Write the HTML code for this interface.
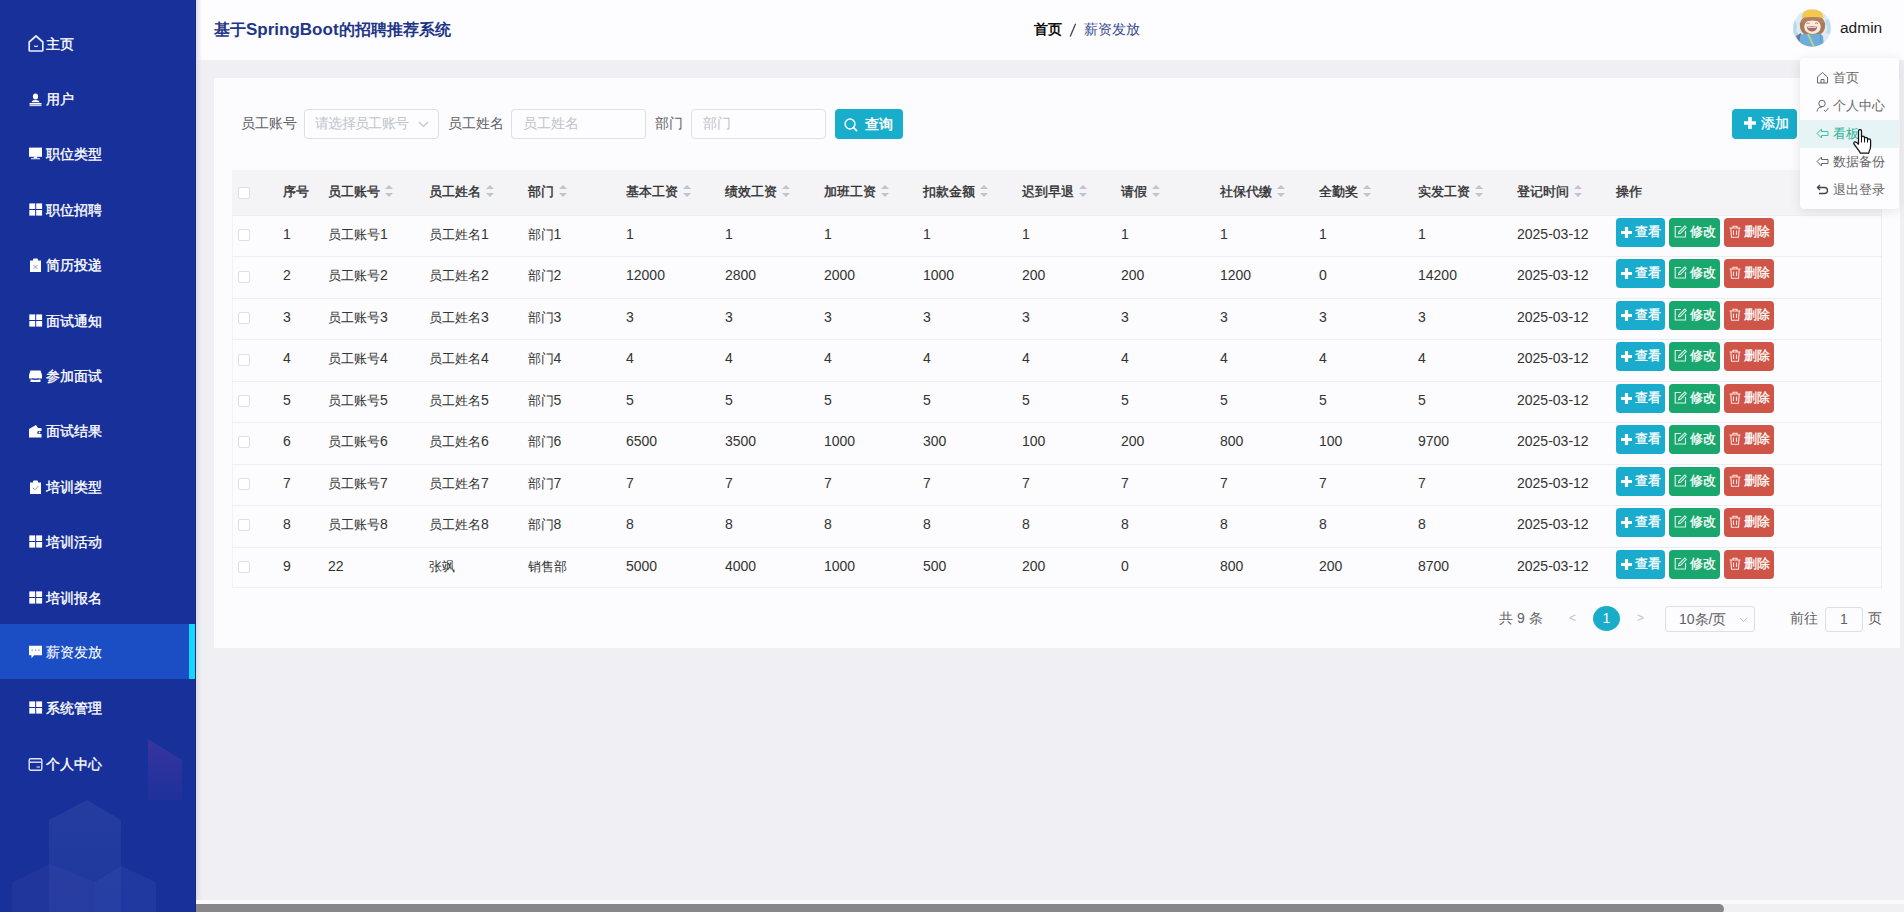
<!DOCTYPE html>
<html><head><meta charset="utf-8">
<style>
*{margin:0;padding:0;box-sizing:border-box}
html,body{width:1904px;height:912px;overflow:hidden;font-family:"Liberation Sans",sans-serif;background:#f0f0f4}
.abs{position:absolute}
#side{position:absolute;left:0;top:0;width:196px;height:912px;background:#17309a;overflow:hidden;border-right:1px solid #142a86}
#side svg.deco{position:absolute;left:0;top:0}
.mi{position:absolute;left:0;width:196px;height:55.4px;color:#fff;font-size:14px;font-weight:normal;-webkit-text-stroke:0.35px #fff}
.mi .ic{position:absolute;left:28px;top:20px;width:15px;height:15px}
.mi .tx{position:absolute;left:46px;top:1.5px;line-height:55.4px;letter-spacing:-0.1px}
.mi.act{background:#1b4ec5;height:55px}
.mi.act .tx{-webkit-text-stroke:0.1px #fff;top:1px}
.mi.act .ic{margin-top:-0.5px}
.mi .ic{margin-top:1.5px}
.mi.act:after{content:"";position:absolute;right:0;top:0;width:7px;height:100%;background:#14d8fa}
#hdr{position:absolute;left:196px;top:0;width:1708px;height:60px;background:#fdfcfe}
#shadowL{position:absolute;left:196px;top:0;width:6px;height:912px;background:linear-gradient(to right,#dcdce6,rgba(240,240,244,0))}
#card{position:absolute;left:214px;top:78px;width:1686px;height:570px;background:#fcfbfd}
.lbl{position:absolute;font-size:14px;color:#606266;line-height:30px;top:108px}
.inp{position:absolute;top:109px;height:30px;border:1px solid #dcdfe6;border-radius:4px;background:#fdfcfe;font-size:14px;color:#c0c4cc;line-height:26px;padding-left:11px}
.sbtn{position:absolute;top:109px;height:30px;border-radius:4px;background:#18aecb;color:#fff;font-size:14px;line-height:30px}
#tbl{position:absolute;background:#fcfbfd;border-bottom:1px solid #ebeef5}
#tbl:after{content:'';position:absolute;right:0;top:0;width:1px;height:100%;background:#ebeef5}
#tbl:before{content:'';position:absolute;left:0;top:0;width:1px;height:100%;background:#f1f1f6}
.th{position:absolute;left:0;top:0;width:1650px;background:#f4f3f6}
.hc{position:absolute;margin-top:0px;font-size:12.7px;font-weight:normal;-webkit-text-stroke:0.4px #303133;color:#303133;white-space:nowrap}
.sort{position:absolute;display:inline-block;width:8px;height:12px;margin-left:5px;top:15px}
.sort b{position:absolute;left:0;width:0;height:0;border-left:4px solid transparent;border-right:4px solid transparent}
.sort .up{top:0;border-bottom:4px solid #c0c4cc}
.sort .dn{top:8px;border-top:4px solid #c0c4cc}
.cb{position:absolute;width:12px;height:12px;border:1px solid #dcdfe6;border-radius:2px;background:#fff}
.tr{position:absolute;left:0;width:1650px;border-top:1px solid #ebeef5}
.tc{position:absolute;top:-2px;font-size:13px;color:#333;white-space:nowrap}
.lt{font-size:14px}
.ops{position:absolute;height:29px;white-space:nowrap}
.btn{position:absolute;top:0;height:29px;border-radius:4px;color:#fff;font-size:13px;line-height:29px}
.b1{left:0;width:49px;background:#1aaccd}
.b2{left:53px;width:51px;background:#1aa76e}
.b3{left:108px;width:50px;background:#cf5549}
.btn .bi{position:absolute}
.btn .bt{position:absolute;top:-1px;-webkit-text-stroke:0.3px #fff}
.ddi{position:absolute;left:0;width:99px;height:28px;font-size:13px;color:#666;line-height:28px}
.ddi span{position:absolute;left:33px;top:0;white-space:nowrap}

</style></head>
<body>
<div id="side">
<svg class="deco" width="196" height="912" viewBox="0 0 196 912">
<defs><linearGradient id="g1" x1="0" y1="0" x2="0" y2="1"><stop offset="0" stop-color="#7a3ca8" stop-opacity="0.35"/><stop offset="1" stop-color="#5a3aa8" stop-opacity="0.12"/></linearGradient>
<linearGradient id="g2" x1="0" y1="0" x2="0" y2="1"><stop offset="0" stop-color="#4a62a8" stop-opacity="0.26"/><stop offset="1" stop-color="#3a56b0" stop-opacity="0.2"/></linearGradient></defs>
<path d="M148 739 L182 760 L182 800 L148 800 Z" fill="url(#g1)"/>
<path d="M49 820 L87 800 L121 820 L121 912 L49 912 Z" fill="url(#g2)"/>
<path d="M12 882 L50 864 L95 882 L95 912 L12 912 Z" fill="#4a4fa8" fill-opacity="0.22"/>
<path d="M95 882 L121 866 L156 882 L156 912 L95 912 Z" fill="#4a66c0" fill-opacity="0.18"/>
</svg>
<div class="mi" style="top:15px"><svg class="ic" viewBox="0 0 16 17" style="left:28px;top:18.5px;width:16px;height:17px"><path d="M1.2 7 L8 1 L14.8 7 V15.2 Q14.8 16 14 16 H2 Q1.2 16 1.2 15.2 Z" fill="none" stroke="#e8ecff" stroke-width="1.7" stroke-linejoin="round"/><path d="M6.2 10.8 Q8 12.2 9.8 10.8" fill="none" stroke="#e8ecff" stroke-width="1.2"/></svg><span class="tx">主页</span></div>
<div class="mi" style="top:70.4px"><svg class="ic" viewBox="0 0 15 15" style="left:28px;top:20px"><ellipse cx="7.5" cy="4.5" rx="2.6" ry="3" fill="#fff"/><path d="M3.5 10.2 Q4 8 7.5 8 Q11 8 11.5 10.2 Z" fill="#fff"/><rect x="1.5" y="11" width="12" height="1.6" fill="#fff"/><rect x="1.5" y="13.2" width="12" height="0.9" fill="#fff"/></svg><span class="tx">用户</span></div>
<div class="mi" style="top:125.8px"><svg class="ic" viewBox="0 0 15 15" style="left:28px;top:20px"><rect x="1" y="0.6" width="13" height="9.2" fill="#fff"/><path d="M5.5 11 H9.5 L9 9.8 H6 Z M3 11.2 H12 V12.3 H3Z" fill="#fff"/></svg><span class="tx">职位类型</span></div>
<div class="mi" style="top:181.2px"><svg class="ic" viewBox="0 0 15 15" style="left:28px;top:20px"><rect x="1.3" y="0.4" width="5.9" height="5.6" fill="#fff"/><rect x="8.2" y="0.4" width="5.9" height="5.6" fill="#fff"/><rect x="1.3" y="7" width="5.9" height="5.6" fill="#fff"/><rect x="8.2" y="7" width="5.9" height="5.6" fill="#fff"/></svg><span class="tx">职位招聘</span></div>
<div class="mi" style="top:236.6px"><svg class="ic" viewBox="0 0 15 15" style="left:28px;top:20px"><path d="M2 2.5 H5 V1.5 Q5 0.5 6 0.5 H9 Q10 0.5 10 1.5 V2.5 H13 V14 H2 Z" fill="#fff"/><path d="M5.5 7 L9.5 11 M9.5 7 L5.5 11" stroke="#8a8fb0" stroke-width="0.9"/></svg><span class="tx">简历投递</span></div>
<div class="mi" style="top:292px"><svg class="ic" viewBox="0 0 15 15" style="left:28px;top:20px"><rect x="1.3" y="0.4" width="5.9" height="5.6" fill="#fff"/><rect x="8.2" y="0.4" width="5.9" height="5.6" fill="#fff"/><rect x="1.3" y="7" width="5.9" height="5.6" fill="#fff"/><rect x="8.2" y="7" width="5.9" height="5.6" fill="#fff"/></svg><span class="tx">面试通知</span></div>
<div class="mi" style="top:347.4px"><svg class="ic" viewBox="0 0 15 15" style="left:28px;top:20px"><path d="M2.5 1.5 H12.5 L14 6 V9.5 H1 V6 Z" fill="#fff"/><path d="M2.5 10.5 H12.5 V13 H2.5Z" fill="#fff"/><path d="M4 9.8 Q7.5 11.5 11 9.8" fill="none" stroke="#17309a" stroke-width="0.8"/></svg><span class="tx">参加面试</span></div>
<div class="mi" style="top:402.8px"><svg class="ic" viewBox="0 0 15 15" style="left:28px;top:20px"><path d="M1 5 L8 1 L10 4 H13.5 V7 H10.5 Q9 7.5 9.2 8.8 Q9.5 10 10.5 10 H13.5 V13.5 H1 Z" fill="#fff"/><circle cx="11.5" cy="8.5" r="0.9" fill="#fff"/></svg><span class="tx">面试结果</span></div>
<div class="mi" style="top:458.2px"><svg class="ic" viewBox="0 0 15 15" style="left:28px;top:20px"><path d="M2 2.5 H5 V1.5 Q5 0.5 6 0.5 H9 Q10 0.5 10 1.5 V2.5 H13 V14 H2 Z" fill="#fff"/><path d="M4.8 7.8 L6.8 9.8 L10.5 6" fill="none" stroke="#8a8fb0" stroke-width="0.9"/></svg><span class="tx">培训类型</span></div>
<div class="mi" style="top:513.6px"><svg class="ic" viewBox="0 0 15 15" style="left:28px;top:20px"><rect x="1.3" y="0.4" width="5.9" height="5.6" fill="#fff"/><rect x="8.2" y="0.4" width="5.9" height="5.6" fill="#fff"/><rect x="1.3" y="7" width="5.9" height="5.6" fill="#fff"/><rect x="8.2" y="7" width="5.9" height="5.6" fill="#fff"/></svg><span class="tx">培训活动</span></div>
<div class="mi" style="top:569px"><svg class="ic" viewBox="0 0 15 15" style="left:28px;top:20px"><rect x="1.3" y="0.4" width="5.9" height="5.6" fill="#fff"/><rect x="8.2" y="0.4" width="5.9" height="5.6" fill="#fff"/><rect x="1.3" y="7" width="5.9" height="5.6" fill="#fff"/><rect x="8.2" y="7" width="5.9" height="5.6" fill="#fff"/></svg><span class="tx">培训报名</span></div>
<div class="mi act" style="top:624.4px"><svg class="ic" viewBox="0 0 15 15" style="left:28px;top:20px"><path d="M1 1.8 H14 V11.2 H6.2 L3.5 14.2 V11.2 H1 Z" fill="#fff"/><rect x="3.5" y="5.5" width="1.3" height="1.3" fill="#8a95c8"/><rect x="6.9" y="5.5" width="1.3" height="1.3" fill="#8a95c8"/><rect x="10.3" y="5.5" width="1.3" height="1.3" fill="#8a95c8"/></svg><span class="tx">薪资发放</span></div>
<div class="mi" style="top:679.8px"><svg class="ic" viewBox="0 0 15 15" style="left:28px;top:20px"><rect x="1.3" y="0.4" width="5.9" height="5.6" fill="#fff"/><rect x="8.2" y="0.4" width="5.9" height="5.6" fill="#fff"/><rect x="1.3" y="7" width="5.9" height="5.6" fill="#fff"/><rect x="8.2" y="7" width="5.9" height="5.6" fill="#fff"/></svg><span class="tx">系统管理</span></div>
<div class="mi" style="top:735.2px"><svg class="ic" viewBox="0 0 15 15" style="left:28px;top:20px"><rect x="1.2" y="1.8" width="12.6" height="11.4" rx="1.5" fill="none" stroke="#dfe4ff" stroke-width="1.4"/><path d="M1.2 5.2 H13.8" stroke="#dfe4ff" stroke-width="1.4"/><path d="M8.5 10 H12" stroke="#dfe4ff" stroke-width="1.1"/></svg><span class="tx" style="font-weight:normal">个人中心</span></div>
</div>
<div id="hdr">
  <div class="abs" style="left:18px;top:19px;font-size:16px;line-height:22px;font-weight:bold;color:#1d3788;white-space:nowrap">基于<span style="font-size:17px">SpringBoot</span>的招聘推荐系统</div>
  <div class="abs" style="left:838px;top:19px;font-size:14px;white-space:nowrap;line-height:20px"><b style="color:#111">首页</b><span style="display:inline-block;width:22px;height:14px;position:relative;vertical-align:-1px"><svg class="abs" style="left:7px;top:2px" width="8" height="15" viewBox="0 0 8 15"><path d="M6.6 0.8 L1.2 13.6" stroke="#444" stroke-width="1.3"/></svg></span><span style="color:#34488f">薪资发放</span></div>
  <svg class="abs" style="left:1597px;top:9px" width="38" height="38" viewBox="0 0 38 38">
    <defs><clipPath id="cc"><circle cx="19" cy="19" r="18.8"/></clipPath></defs>
    <g clip-path="url(#cc)">
      <rect width="38" height="38" fill="#dcebf6"/>
      <path d="M0 10 Q6 14 3 22 Q8 26 4 32 L0 32Z" fill="#b9d8f0"/>
      <path d="M32 12 Q36 18 33 24 L38 26 V8Z" fill="#bcdcf2"/>
      <path d="M3 27 L8 24 L10 30 L6 33Z" fill="#6d7690"/>
      <path d="M6 38 L7 27 Q12 23 19 23.5 Q26 23 30 27 L31 38Z" fill="#6eaddb"/>
      <path d="M14 25 L20 38 L22 38 L16 25Z" fill="#b6d68a"/>
      <path d="M27 20 L28 34" stroke="#6a8aa0" stroke-width="0.6"/>
      <ellipse cx="19.5" cy="15.5" rx="12.5" ry="10" fill="#b08060"/>
      <path d="M6.8 14 Q6.5 22 11 25 L28 25 Q32.5 22 32.2 14Z" fill="#a97a5a"/>
      <ellipse cx="19.5" cy="17.8" rx="8.3" ry="7.2" fill="#fbe9de"/>
      <path d="M11 10.5 Q19.5 7.5 28 10.5 L28 13 Q19.5 10 11 13Z" fill="#b08060"/>
      <path d="M13.8 17.8 Q19 16.8 24.2 17.8 Q23.5 22.5 19 22.5 Q14.5 22.5 13.8 17.8Z" fill="#a86a62"/>
      <path d="M14.8 18.3 Q19 17.6 23.2 18.3 L23 19 Q19 18.4 15 19Z" fill="#f5f0f0"/>
      <path d="M13.5 14.5 Q15 13.5 16.5 14.5 M22 14.5 Q23.5 13.5 25 14.5" stroke="#8a5a48" stroke-width="0.7" fill="none"/>
      <path d="M8.5 9 Q9 0.5 19.5 0.3 Q30 0.5 30.8 9 Q19.5 6.8 8.5 9Z" fill="#f2c94e"/>
    </g>
  </svg>
  <div class="abs" style="left:1644px;top:18px;font-size:15.5px;color:#1a1a1a;line-height:20px">admin</div>
</div>
<div id="shadowL"></div>
<div id="card"></div>
<div class="lbl" style="left:241px">员工账号</div>
<div class="inp" style="left:304px;width:135px;font-size:14px;letter-spacing:-0.7px;padding-left:10px">请选择员工账号<svg class="abs" style="left:113px;top:11px" width="11" height="7" viewBox="0 0 11 7"><path d="M1 1 L5.5 5.5 L10 1" fill="none" stroke="#c0c4cc" stroke-width="1.1"/></svg></div>
<div class="lbl" style="left:448px">员工姓名</div>
<div class="inp" style="left:511px;width:135px">员工姓名</div>
<div class="lbl" style="left:655px">部门</div>
<div class="inp" style="left:691px;width:135px">部门</div>
<div class="sbtn" style="left:835px;width:68px"><svg class="abs" style="left:8.5px;top:8.5px" width="14" height="14" viewBox="0 0 14 14"><circle cx="6" cy="6" r="4.9" fill="none" stroke="#fff" stroke-width="1.5"/><path d="M9.6 9.6 L12.6 12.6" stroke="#fff" stroke-width="1.8" stroke-linecap="round"/></svg><span class="abs" style="left:30px;top:0;font-weight:bold">查询</span></div>
<div class="sbtn" style="left:1732px;width:65px"><svg class="abs" style="left:12px;top:8px" width="12" height="12" viewBox="0 0 12 12"><path d="M4.2 0 H7.8 V4.2 H12 V7.8 H7.8 V12 H4.2 V7.8 H0 V4.2 H4.2Z" fill="#fff"/></svg><span class="abs" style="left:29px;top:-1px;-webkit-text-stroke:0.3px #fff">添加</span></div>
<div id="tbl" style="left:232px;top:170px;width:1650px;height:418.00px">
<div class="th" style="height:45px"></div>
<div class="cb" style="left:6px;top:17px"></div>
<div class="hc" style="left:51px;top:0;height:45px;line-height:45px">序号</div>
<div class="hc" style="left:96px;top:0;height:45px;line-height:45px">员工账号<i class="sort"><b class="up"></b><b class="dn"></b></i></div>
<div class="hc" style="left:197px;top:0;height:45px;line-height:45px">员工姓名<i class="sort"><b class="up"></b><b class="dn"></b></i></div>
<div class="hc" style="left:295.5px;top:0;height:45px;line-height:45px">部门<i class="sort"><b class="up"></b><b class="dn"></b></i></div>
<div class="hc" style="left:394px;top:0;height:45px;line-height:45px">基本工资<i class="sort"><b class="up"></b><b class="dn"></b></i></div>
<div class="hc" style="left:493px;top:0;height:45px;line-height:45px">绩效工资<i class="sort"><b class="up"></b><b class="dn"></b></i></div>
<div class="hc" style="left:592px;top:0;height:45px;line-height:45px">加班工资<i class="sort"><b class="up"></b><b class="dn"></b></i></div>
<div class="hc" style="left:691px;top:0;height:45px;line-height:45px">扣款金额<i class="sort"><b class="up"></b><b class="dn"></b></i></div>
<div class="hc" style="left:790px;top:0;height:45px;line-height:45px">迟到早退<i class="sort"><b class="up"></b><b class="dn"></b></i></div>
<div class="hc" style="left:889px;top:0;height:45px;line-height:45px">请假<i class="sort"><b class="up"></b><b class="dn"></b></i></div>
<div class="hc" style="left:988px;top:0;height:45px;line-height:45px">社保代缴<i class="sort"><b class="up"></b><b class="dn"></b></i></div>
<div class="hc" style="left:1087px;top:0;height:45px;line-height:45px">全勤奖<i class="sort"><b class="up"></b><b class="dn"></b></i></div>
<div class="hc" style="left:1186px;top:0;height:45px;line-height:45px">实发工资<i class="sort"><b class="up"></b><b class="dn"></b></i></div>
<div class="hc" style="left:1285px;top:0;height:45px;line-height:45px">登记时间<i class="sort"><b class="up"></b><b class="dn"></b></i></div>
<div class="hc" style="left:1384px;top:0;height:45px;line-height:45px">操作</div>
<div class="tr" style="top:45.00px;height:41.44px">
<div class="cb" style="left:6px;top:13.22px"></div>
<div class="tc" style="left:51px;line-height:41.44px"><span class="lt">1</span></div>
<div class="tc" style="left:96px;line-height:41.44px">员工账号<span class="lt">1</span></div>
<div class="tc" style="left:197px;line-height:41.44px">员工姓名<span class="lt">1</span></div>
<div class="tc" style="left:295.5px;line-height:41.44px">部门<span class="lt">1</span></div>
<div class="tc" style="left:394px;line-height:41.44px"><span class="lt">1</span></div>
<div class="tc" style="left:493px;line-height:41.44px"><span class="lt">1</span></div>
<div class="tc" style="left:592px;line-height:41.44px"><span class="lt">1</span></div>
<div class="tc" style="left:691px;line-height:41.44px"><span class="lt">1</span></div>
<div class="tc" style="left:790px;line-height:41.44px"><span class="lt">1</span></div>
<div class="tc" style="left:889px;line-height:41.44px"><span class="lt">1</span></div>
<div class="tc" style="left:988px;line-height:41.44px"><span class="lt">1</span></div>
<div class="tc" style="left:1087px;line-height:41.44px"><span class="lt">1</span></div>
<div class="tc" style="left:1186px;line-height:41.44px"><span class="lt">1</span></div>
<div class="tc" style="left:1285px;line-height:41.44px"><span class="lt">2025-03-12</span></div>
<div class="ops" style="left:1384px;top:2px"><span class="btn b1"><svg class="bi" style="left:5px;top:9px" width="11" height="11" viewBox="0 0 11 11"><path d="M3.9 0 H7.1 V3.9 H11 V7.1 H7.1 V11 H3.9 V7.1 H0 V3.9 H3.9Z" fill="#fff"/></svg><span class="bt" style="left:19px">查看</span></span><span class="btn b2"><svg class="bi" style="left:5px;top:7px" width="13" height="13" viewBox="0 0 13 13"><path d="M7 1.5 H1.2 V12 H11.5 V6" fill="none" stroke="#dff5ea" stroke-width="1.1"/><path d="M4.5 8.8 L5 6.8 L10.8 1 L12.3 2.5 L6.5 8.3 Z" fill="none" stroke="#dff5ea" stroke-width="1.1"/></svg><span class="bt" style="left:21px">修改</span></span><span class="btn b3"><svg class="bi" style="left:5px;top:7px" width="12" height="13" viewBox="0 0 12 13"><path d="M0.5 3 H11.5 M4 3 V1.2 H8 V3 M1.8 3 L2.5 12.2 H9.5 L10.2 3 M4.5 5.5 V10 M7.5 5.5 V10" fill="none" stroke="#fde4e0" stroke-width="1.1"/></svg><span class="bt" style="left:20px">删除</span></span></div>
</div>
<div class="tr" style="top:86.44px;height:41.44px">
<div class="cb" style="left:6px;top:13.22px"></div>
<div class="tc" style="left:51px;line-height:41.44px"><span class="lt">2</span></div>
<div class="tc" style="left:96px;line-height:41.44px">员工账号<span class="lt">2</span></div>
<div class="tc" style="left:197px;line-height:41.44px">员工姓名<span class="lt">2</span></div>
<div class="tc" style="left:295.5px;line-height:41.44px">部门<span class="lt">2</span></div>
<div class="tc" style="left:394px;line-height:41.44px"><span class="lt">12000</span></div>
<div class="tc" style="left:493px;line-height:41.44px"><span class="lt">2800</span></div>
<div class="tc" style="left:592px;line-height:41.44px"><span class="lt">2000</span></div>
<div class="tc" style="left:691px;line-height:41.44px"><span class="lt">1000</span></div>
<div class="tc" style="left:790px;line-height:41.44px"><span class="lt">200</span></div>
<div class="tc" style="left:889px;line-height:41.44px"><span class="lt">200</span></div>
<div class="tc" style="left:988px;line-height:41.44px"><span class="lt">1200</span></div>
<div class="tc" style="left:1087px;line-height:41.44px"><span class="lt">0</span></div>
<div class="tc" style="left:1186px;line-height:41.44px"><span class="lt">14200</span></div>
<div class="tc" style="left:1285px;line-height:41.44px"><span class="lt">2025-03-12</span></div>
<div class="ops" style="left:1384px;top:2px"><span class="btn b1"><svg class="bi" style="left:5px;top:9px" width="11" height="11" viewBox="0 0 11 11"><path d="M3.9 0 H7.1 V3.9 H11 V7.1 H7.1 V11 H3.9 V7.1 H0 V3.9 H3.9Z" fill="#fff"/></svg><span class="bt" style="left:19px">查看</span></span><span class="btn b2"><svg class="bi" style="left:5px;top:7px" width="13" height="13" viewBox="0 0 13 13"><path d="M7 1.5 H1.2 V12 H11.5 V6" fill="none" stroke="#dff5ea" stroke-width="1.1"/><path d="M4.5 8.8 L5 6.8 L10.8 1 L12.3 2.5 L6.5 8.3 Z" fill="none" stroke="#dff5ea" stroke-width="1.1"/></svg><span class="bt" style="left:21px">修改</span></span><span class="btn b3"><svg class="bi" style="left:5px;top:7px" width="12" height="13" viewBox="0 0 12 13"><path d="M0.5 3 H11.5 M4 3 V1.2 H8 V3 M1.8 3 L2.5 12.2 H9.5 L10.2 3 M4.5 5.5 V10 M7.5 5.5 V10" fill="none" stroke="#fde4e0" stroke-width="1.1"/></svg><span class="bt" style="left:20px">删除</span></span></div>
</div>
<div class="tr" style="top:127.89px;height:41.44px">
<div class="cb" style="left:6px;top:13.22px"></div>
<div class="tc" style="left:51px;line-height:41.44px"><span class="lt">3</span></div>
<div class="tc" style="left:96px;line-height:41.44px">员工账号<span class="lt">3</span></div>
<div class="tc" style="left:197px;line-height:41.44px">员工姓名<span class="lt">3</span></div>
<div class="tc" style="left:295.5px;line-height:41.44px">部门<span class="lt">3</span></div>
<div class="tc" style="left:394px;line-height:41.44px"><span class="lt">3</span></div>
<div class="tc" style="left:493px;line-height:41.44px"><span class="lt">3</span></div>
<div class="tc" style="left:592px;line-height:41.44px"><span class="lt">3</span></div>
<div class="tc" style="left:691px;line-height:41.44px"><span class="lt">3</span></div>
<div class="tc" style="left:790px;line-height:41.44px"><span class="lt">3</span></div>
<div class="tc" style="left:889px;line-height:41.44px"><span class="lt">3</span></div>
<div class="tc" style="left:988px;line-height:41.44px"><span class="lt">3</span></div>
<div class="tc" style="left:1087px;line-height:41.44px"><span class="lt">3</span></div>
<div class="tc" style="left:1186px;line-height:41.44px"><span class="lt">3</span></div>
<div class="tc" style="left:1285px;line-height:41.44px"><span class="lt">2025-03-12</span></div>
<div class="ops" style="left:1384px;top:2px"><span class="btn b1"><svg class="bi" style="left:5px;top:9px" width="11" height="11" viewBox="0 0 11 11"><path d="M3.9 0 H7.1 V3.9 H11 V7.1 H7.1 V11 H3.9 V7.1 H0 V3.9 H3.9Z" fill="#fff"/></svg><span class="bt" style="left:19px">查看</span></span><span class="btn b2"><svg class="bi" style="left:5px;top:7px" width="13" height="13" viewBox="0 0 13 13"><path d="M7 1.5 H1.2 V12 H11.5 V6" fill="none" stroke="#dff5ea" stroke-width="1.1"/><path d="M4.5 8.8 L5 6.8 L10.8 1 L12.3 2.5 L6.5 8.3 Z" fill="none" stroke="#dff5ea" stroke-width="1.1"/></svg><span class="bt" style="left:21px">修改</span></span><span class="btn b3"><svg class="bi" style="left:5px;top:7px" width="12" height="13" viewBox="0 0 12 13"><path d="M0.5 3 H11.5 M4 3 V1.2 H8 V3 M1.8 3 L2.5 12.2 H9.5 L10.2 3 M4.5 5.5 V10 M7.5 5.5 V10" fill="none" stroke="#fde4e0" stroke-width="1.1"/></svg><span class="bt" style="left:20px">删除</span></span></div>
</div>
<div class="tr" style="top:169.33px;height:41.44px">
<div class="cb" style="left:6px;top:13.22px"></div>
<div class="tc" style="left:51px;line-height:41.44px"><span class="lt">4</span></div>
<div class="tc" style="left:96px;line-height:41.44px">员工账号<span class="lt">4</span></div>
<div class="tc" style="left:197px;line-height:41.44px">员工姓名<span class="lt">4</span></div>
<div class="tc" style="left:295.5px;line-height:41.44px">部门<span class="lt">4</span></div>
<div class="tc" style="left:394px;line-height:41.44px"><span class="lt">4</span></div>
<div class="tc" style="left:493px;line-height:41.44px"><span class="lt">4</span></div>
<div class="tc" style="left:592px;line-height:41.44px"><span class="lt">4</span></div>
<div class="tc" style="left:691px;line-height:41.44px"><span class="lt">4</span></div>
<div class="tc" style="left:790px;line-height:41.44px"><span class="lt">4</span></div>
<div class="tc" style="left:889px;line-height:41.44px"><span class="lt">4</span></div>
<div class="tc" style="left:988px;line-height:41.44px"><span class="lt">4</span></div>
<div class="tc" style="left:1087px;line-height:41.44px"><span class="lt">4</span></div>
<div class="tc" style="left:1186px;line-height:41.44px"><span class="lt">4</span></div>
<div class="tc" style="left:1285px;line-height:41.44px"><span class="lt">2025-03-12</span></div>
<div class="ops" style="left:1384px;top:2px"><span class="btn b1"><svg class="bi" style="left:5px;top:9px" width="11" height="11" viewBox="0 0 11 11"><path d="M3.9 0 H7.1 V3.9 H11 V7.1 H7.1 V11 H3.9 V7.1 H0 V3.9 H3.9Z" fill="#fff"/></svg><span class="bt" style="left:19px">查看</span></span><span class="btn b2"><svg class="bi" style="left:5px;top:7px" width="13" height="13" viewBox="0 0 13 13"><path d="M7 1.5 H1.2 V12 H11.5 V6" fill="none" stroke="#dff5ea" stroke-width="1.1"/><path d="M4.5 8.8 L5 6.8 L10.8 1 L12.3 2.5 L6.5 8.3 Z" fill="none" stroke="#dff5ea" stroke-width="1.1"/></svg><span class="bt" style="left:21px">修改</span></span><span class="btn b3"><svg class="bi" style="left:5px;top:7px" width="12" height="13" viewBox="0 0 12 13"><path d="M0.5 3 H11.5 M4 3 V1.2 H8 V3 M1.8 3 L2.5 12.2 H9.5 L10.2 3 M4.5 5.5 V10 M7.5 5.5 V10" fill="none" stroke="#fde4e0" stroke-width="1.1"/></svg><span class="bt" style="left:20px">删除</span></span></div>
</div>
<div class="tr" style="top:210.78px;height:41.44px">
<div class="cb" style="left:6px;top:13.22px"></div>
<div class="tc" style="left:51px;line-height:41.44px"><span class="lt">5</span></div>
<div class="tc" style="left:96px;line-height:41.44px">员工账号<span class="lt">5</span></div>
<div class="tc" style="left:197px;line-height:41.44px">员工姓名<span class="lt">5</span></div>
<div class="tc" style="left:295.5px;line-height:41.44px">部门<span class="lt">5</span></div>
<div class="tc" style="left:394px;line-height:41.44px"><span class="lt">5</span></div>
<div class="tc" style="left:493px;line-height:41.44px"><span class="lt">5</span></div>
<div class="tc" style="left:592px;line-height:41.44px"><span class="lt">5</span></div>
<div class="tc" style="left:691px;line-height:41.44px"><span class="lt">5</span></div>
<div class="tc" style="left:790px;line-height:41.44px"><span class="lt">5</span></div>
<div class="tc" style="left:889px;line-height:41.44px"><span class="lt">5</span></div>
<div class="tc" style="left:988px;line-height:41.44px"><span class="lt">5</span></div>
<div class="tc" style="left:1087px;line-height:41.44px"><span class="lt">5</span></div>
<div class="tc" style="left:1186px;line-height:41.44px"><span class="lt">5</span></div>
<div class="tc" style="left:1285px;line-height:41.44px"><span class="lt">2025-03-12</span></div>
<div class="ops" style="left:1384px;top:2px"><span class="btn b1"><svg class="bi" style="left:5px;top:9px" width="11" height="11" viewBox="0 0 11 11"><path d="M3.9 0 H7.1 V3.9 H11 V7.1 H7.1 V11 H3.9 V7.1 H0 V3.9 H3.9Z" fill="#fff"/></svg><span class="bt" style="left:19px">查看</span></span><span class="btn b2"><svg class="bi" style="left:5px;top:7px" width="13" height="13" viewBox="0 0 13 13"><path d="M7 1.5 H1.2 V12 H11.5 V6" fill="none" stroke="#dff5ea" stroke-width="1.1"/><path d="M4.5 8.8 L5 6.8 L10.8 1 L12.3 2.5 L6.5 8.3 Z" fill="none" stroke="#dff5ea" stroke-width="1.1"/></svg><span class="bt" style="left:21px">修改</span></span><span class="btn b3"><svg class="bi" style="left:5px;top:7px" width="12" height="13" viewBox="0 0 12 13"><path d="M0.5 3 H11.5 M4 3 V1.2 H8 V3 M1.8 3 L2.5 12.2 H9.5 L10.2 3 M4.5 5.5 V10 M7.5 5.5 V10" fill="none" stroke="#fde4e0" stroke-width="1.1"/></svg><span class="bt" style="left:20px">删除</span></span></div>
</div>
<div class="tr" style="top:252.22px;height:41.44px">
<div class="cb" style="left:6px;top:13.22px"></div>
<div class="tc" style="left:51px;line-height:41.44px"><span class="lt">6</span></div>
<div class="tc" style="left:96px;line-height:41.44px">员工账号<span class="lt">6</span></div>
<div class="tc" style="left:197px;line-height:41.44px">员工姓名<span class="lt">6</span></div>
<div class="tc" style="left:295.5px;line-height:41.44px">部门<span class="lt">6</span></div>
<div class="tc" style="left:394px;line-height:41.44px"><span class="lt">6500</span></div>
<div class="tc" style="left:493px;line-height:41.44px"><span class="lt">3500</span></div>
<div class="tc" style="left:592px;line-height:41.44px"><span class="lt">1000</span></div>
<div class="tc" style="left:691px;line-height:41.44px"><span class="lt">300</span></div>
<div class="tc" style="left:790px;line-height:41.44px"><span class="lt">100</span></div>
<div class="tc" style="left:889px;line-height:41.44px"><span class="lt">200</span></div>
<div class="tc" style="left:988px;line-height:41.44px"><span class="lt">800</span></div>
<div class="tc" style="left:1087px;line-height:41.44px"><span class="lt">100</span></div>
<div class="tc" style="left:1186px;line-height:41.44px"><span class="lt">9700</span></div>
<div class="tc" style="left:1285px;line-height:41.44px"><span class="lt">2025-03-12</span></div>
<div class="ops" style="left:1384px;top:2px"><span class="btn b1"><svg class="bi" style="left:5px;top:9px" width="11" height="11" viewBox="0 0 11 11"><path d="M3.9 0 H7.1 V3.9 H11 V7.1 H7.1 V11 H3.9 V7.1 H0 V3.9 H3.9Z" fill="#fff"/></svg><span class="bt" style="left:19px">查看</span></span><span class="btn b2"><svg class="bi" style="left:5px;top:7px" width="13" height="13" viewBox="0 0 13 13"><path d="M7 1.5 H1.2 V12 H11.5 V6" fill="none" stroke="#dff5ea" stroke-width="1.1"/><path d="M4.5 8.8 L5 6.8 L10.8 1 L12.3 2.5 L6.5 8.3 Z" fill="none" stroke="#dff5ea" stroke-width="1.1"/></svg><span class="bt" style="left:21px">修改</span></span><span class="btn b3"><svg class="bi" style="left:5px;top:7px" width="12" height="13" viewBox="0 0 12 13"><path d="M0.5 3 H11.5 M4 3 V1.2 H8 V3 M1.8 3 L2.5 12.2 H9.5 L10.2 3 M4.5 5.5 V10 M7.5 5.5 V10" fill="none" stroke="#fde4e0" stroke-width="1.1"/></svg><span class="bt" style="left:20px">删除</span></span></div>
</div>
<div class="tr" style="top:293.67px;height:41.44px">
<div class="cb" style="left:6px;top:13.22px"></div>
<div class="tc" style="left:51px;line-height:41.44px"><span class="lt">7</span></div>
<div class="tc" style="left:96px;line-height:41.44px">员工账号<span class="lt">7</span></div>
<div class="tc" style="left:197px;line-height:41.44px">员工姓名<span class="lt">7</span></div>
<div class="tc" style="left:295.5px;line-height:41.44px">部门<span class="lt">7</span></div>
<div class="tc" style="left:394px;line-height:41.44px"><span class="lt">7</span></div>
<div class="tc" style="left:493px;line-height:41.44px"><span class="lt">7</span></div>
<div class="tc" style="left:592px;line-height:41.44px"><span class="lt">7</span></div>
<div class="tc" style="left:691px;line-height:41.44px"><span class="lt">7</span></div>
<div class="tc" style="left:790px;line-height:41.44px"><span class="lt">7</span></div>
<div class="tc" style="left:889px;line-height:41.44px"><span class="lt">7</span></div>
<div class="tc" style="left:988px;line-height:41.44px"><span class="lt">7</span></div>
<div class="tc" style="left:1087px;line-height:41.44px"><span class="lt">7</span></div>
<div class="tc" style="left:1186px;line-height:41.44px"><span class="lt">7</span></div>
<div class="tc" style="left:1285px;line-height:41.44px"><span class="lt">2025-03-12</span></div>
<div class="ops" style="left:1384px;top:2px"><span class="btn b1"><svg class="bi" style="left:5px;top:9px" width="11" height="11" viewBox="0 0 11 11"><path d="M3.9 0 H7.1 V3.9 H11 V7.1 H7.1 V11 H3.9 V7.1 H0 V3.9 H3.9Z" fill="#fff"/></svg><span class="bt" style="left:19px">查看</span></span><span class="btn b2"><svg class="bi" style="left:5px;top:7px" width="13" height="13" viewBox="0 0 13 13"><path d="M7 1.5 H1.2 V12 H11.5 V6" fill="none" stroke="#dff5ea" stroke-width="1.1"/><path d="M4.5 8.8 L5 6.8 L10.8 1 L12.3 2.5 L6.5 8.3 Z" fill="none" stroke="#dff5ea" stroke-width="1.1"/></svg><span class="bt" style="left:21px">修改</span></span><span class="btn b3"><svg class="bi" style="left:5px;top:7px" width="12" height="13" viewBox="0 0 12 13"><path d="M0.5 3 H11.5 M4 3 V1.2 H8 V3 M1.8 3 L2.5 12.2 H9.5 L10.2 3 M4.5 5.5 V10 M7.5 5.5 V10" fill="none" stroke="#fde4e0" stroke-width="1.1"/></svg><span class="bt" style="left:20px">删除</span></span></div>
</div>
<div class="tr" style="top:335.11px;height:41.44px">
<div class="cb" style="left:6px;top:13.22px"></div>
<div class="tc" style="left:51px;line-height:41.44px"><span class="lt">8</span></div>
<div class="tc" style="left:96px;line-height:41.44px">员工账号<span class="lt">8</span></div>
<div class="tc" style="left:197px;line-height:41.44px">员工姓名<span class="lt">8</span></div>
<div class="tc" style="left:295.5px;line-height:41.44px">部门<span class="lt">8</span></div>
<div class="tc" style="left:394px;line-height:41.44px"><span class="lt">8</span></div>
<div class="tc" style="left:493px;line-height:41.44px"><span class="lt">8</span></div>
<div class="tc" style="left:592px;line-height:41.44px"><span class="lt">8</span></div>
<div class="tc" style="left:691px;line-height:41.44px"><span class="lt">8</span></div>
<div class="tc" style="left:790px;line-height:41.44px"><span class="lt">8</span></div>
<div class="tc" style="left:889px;line-height:41.44px"><span class="lt">8</span></div>
<div class="tc" style="left:988px;line-height:41.44px"><span class="lt">8</span></div>
<div class="tc" style="left:1087px;line-height:41.44px"><span class="lt">8</span></div>
<div class="tc" style="left:1186px;line-height:41.44px"><span class="lt">8</span></div>
<div class="tc" style="left:1285px;line-height:41.44px"><span class="lt">2025-03-12</span></div>
<div class="ops" style="left:1384px;top:2px"><span class="btn b1"><svg class="bi" style="left:5px;top:9px" width="11" height="11" viewBox="0 0 11 11"><path d="M3.9 0 H7.1 V3.9 H11 V7.1 H7.1 V11 H3.9 V7.1 H0 V3.9 H3.9Z" fill="#fff"/></svg><span class="bt" style="left:19px">查看</span></span><span class="btn b2"><svg class="bi" style="left:5px;top:7px" width="13" height="13" viewBox="0 0 13 13"><path d="M7 1.5 H1.2 V12 H11.5 V6" fill="none" stroke="#dff5ea" stroke-width="1.1"/><path d="M4.5 8.8 L5 6.8 L10.8 1 L12.3 2.5 L6.5 8.3 Z" fill="none" stroke="#dff5ea" stroke-width="1.1"/></svg><span class="bt" style="left:21px">修改</span></span><span class="btn b3"><svg class="bi" style="left:5px;top:7px" width="12" height="13" viewBox="0 0 12 13"><path d="M0.5 3 H11.5 M4 3 V1.2 H8 V3 M1.8 3 L2.5 12.2 H9.5 L10.2 3 M4.5 5.5 V10 M7.5 5.5 V10" fill="none" stroke="#fde4e0" stroke-width="1.1"/></svg><span class="bt" style="left:20px">删除</span></span></div>
</div>
<div class="tr" style="top:376.56px;height:41.44px">
<div class="cb" style="left:6px;top:13.22px"></div>
<div class="tc" style="left:51px;line-height:41.44px"><span class="lt">9</span></div>
<div class="tc" style="left:96px;line-height:41.44px"><span class="lt">22</span></div>
<div class="tc" style="left:197px;line-height:41.44px">张飒</div>
<div class="tc" style="left:295.5px;line-height:41.44px">销售部</div>
<div class="tc" style="left:394px;line-height:41.44px"><span class="lt">5000</span></div>
<div class="tc" style="left:493px;line-height:41.44px"><span class="lt">4000</span></div>
<div class="tc" style="left:592px;line-height:41.44px"><span class="lt">1000</span></div>
<div class="tc" style="left:691px;line-height:41.44px"><span class="lt">500</span></div>
<div class="tc" style="left:790px;line-height:41.44px"><span class="lt">200</span></div>
<div class="tc" style="left:889px;line-height:41.44px"><span class="lt">0</span></div>
<div class="tc" style="left:988px;line-height:41.44px"><span class="lt">800</span></div>
<div class="tc" style="left:1087px;line-height:41.44px"><span class="lt">200</span></div>
<div class="tc" style="left:1186px;line-height:41.44px"><span class="lt">8700</span></div>
<div class="tc" style="left:1285px;line-height:41.44px"><span class="lt">2025-03-12</span></div>
<div class="ops" style="left:1384px;top:2px"><span class="btn b1"><svg class="bi" style="left:5px;top:9px" width="11" height="11" viewBox="0 0 11 11"><path d="M3.9 0 H7.1 V3.9 H11 V7.1 H7.1 V11 H3.9 V7.1 H0 V3.9 H3.9Z" fill="#fff"/></svg><span class="bt" style="left:19px">查看</span></span><span class="btn b2"><svg class="bi" style="left:5px;top:7px" width="13" height="13" viewBox="0 0 13 13"><path d="M7 1.5 H1.2 V12 H11.5 V6" fill="none" stroke="#dff5ea" stroke-width="1.1"/><path d="M4.5 8.8 L5 6.8 L10.8 1 L12.3 2.5 L6.5 8.3 Z" fill="none" stroke="#dff5ea" stroke-width="1.1"/></svg><span class="bt" style="left:21px">修改</span></span><span class="btn b3"><svg class="bi" style="left:5px;top:7px" width="12" height="13" viewBox="0 0 12 13"><path d="M0.5 3 H11.5 M4 3 V1.2 H8 V3 M1.8 3 L2.5 12.2 H9.5 L10.2 3 M4.5 5.5 V10 M7.5 5.5 V10" fill="none" stroke="#fde4e0" stroke-width="1.1"/></svg><span class="bt" style="left:20px">删除</span></span></div>
</div>
</div><div class="abs" style="left:1499px;top:608px;font-size:14px;color:#606266;line-height:20px;white-space:nowrap">共 9 条</div>
<div class="abs" style="left:1569px;top:608px;font-size:12px;color:#c0c4cc;line-height:20px">&lt;</div>
<div class="abs" style="left:1593px;top:606px;width:27px;height:25px;border-radius:50%;background:#1aadca;color:#fff;font-size:14px;line-height:25px;text-align:center">1</div>
<div class="abs" style="left:1637px;top:608px;font-size:12px;color:#c0c4cc;line-height:20px">&gt;</div>
<div class="abs" style="left:1665px;top:606px;width:90px;height:26px;border:1px solid #dcdfe6;border-radius:3px;font-size:14px;color:#606266;line-height:24px;padding-left:13px">10条/页<svg class="abs" style="left:73px;top:10px" width="9" height="6" viewBox="0 0 9 6"><path d="M1 1 L4.5 4.5 L8 1" fill="none" stroke="#c0c4cc" stroke-width="1"/></svg></div>
<div class="abs" style="left:1790px;top:608px;font-size:14px;color:#606266;line-height:20px">前往</div>
<div class="abs" style="left:1825px;top:607px;width:38px;height:25px;border:1px solid #dcdfe6;border-radius:3px;font-size:14px;color:#606266;line-height:23px;text-align:center">1</div>
<div class="abs" style="left:1868px;top:608px;font-size:14px;color:#606266;line-height:20px">页</div>
<div id="dd" class="abs" style="left:1800px;top:58px;width:99px;height:151px;background:#fdfcfe;border-radius:4px;box-shadow:0 2px 12px rgba(0,0,0,0.10)">
  <div class="abs" style="left:0;top:62px;width:99px;height:28px;background:#e6f4f6"></div>
  <div class="ddi" style="top:6px"><svg class="abs" style="left:16px;top:7px" width="13" height="13" viewBox="0 0 13 13"><path d="M1.5 6 L6.5 1.5 L11.5 6 V12 H1.5Z M5 12 V8.5 H8 V12" fill="none" stroke="#666" stroke-width="1"/></svg><span>首页</span></div>
  <div class="ddi" style="top:34px"><svg class="abs" style="left:16px;top:7px" width="13" height="13" viewBox="0 0 13 13"><circle cx="6" cy="4.5" r="3.2" fill="none" stroke="#666" stroke-width="1"/><path d="M1 12.5 Q1.5 8 6 8 M8 11 L9.5 12.5 L12.5 9" fill="none" stroke="#666" stroke-width="1"/></svg><span>个人中心</span></div>
  <div class="ddi" style="top:62px;color:#2fb093"><svg class="abs" style="left:16px;top:7px" width="13" height="13" viewBox="0 0 13 13"><path d="M1 6.5 L5.5 2 V4.5 H12 V8.5 H5.5 V11 Z" fill="none" stroke="#3fbfa5" stroke-width="1"/></svg><span>看板</span></div>
  <div class="ddi" style="top:90px"><svg class="abs" style="left:16px;top:7px" width="13" height="13" viewBox="0 0 13 13"><path d="M1 6.5 L5.5 2 V4.5 H12 V8.5 H5.5 V11 Z" fill="none" stroke="#666" stroke-width="1"/></svg><span>数据备份</span></div>
  <div class="ddi" style="top:118px"><svg class="abs" style="left:16px;top:7px" width="13" height="13" viewBox="0 0 13 13"><path d="M4 2 L1.5 4.5 L4 7" fill="none" stroke="#444" stroke-width="1.3"/><path d="M1.5 4.5 H8.5 Q11.5 4.5 11.5 7.5 Q11.5 10.5 8.5 10.5 H3" fill="none" stroke="#444" stroke-width="1.3"/></svg><span>退出登录</span></div>
</div>
<svg class="abs" style="left:1853px;top:129px" width="20" height="26" viewBox="0 0 20 26"><path d="M5.5 2 Q5.5 0.6 7 0.6 Q8.5 0.6 8.5 2 L8.5 8.6 Q8.8 7.2 10 7.2 Q11.5 7.2 11.5 8.7 L11.5 9.6 Q12 8.4 13 8.4 Q14.5 8.4 14.5 10 L14.5 10.9 Q15 9.9 16 9.9 Q17.6 9.9 17.6 11.6 L17.6 17 Q17.6 20 16.2 22 L15.8 24 L7.2 24 L6.6 22.6 Q3 18 1.1 15.2 Q0.4 13.9 1.3 13.1 Q2.3 12.4 3.6 13.4 L5.5 15.2 Z" fill="#fff" stroke="#111" stroke-width="1.25" stroke-linejoin="round"/><path d="M8.5 8.6 V13.5 M11.5 9.6 V13.5 M14.5 10.9 V13.5" stroke="#111" stroke-width="1"/></svg>
<div class="abs" style="left:196px;top:900px;width:1708px;height:4px;background:#fafafc"></div>
<div class="abs" style="left:196px;top:904px;width:1528px;height:10px;background:#878789;border-radius:0 6px 6px 0"></div>
</body></html>
